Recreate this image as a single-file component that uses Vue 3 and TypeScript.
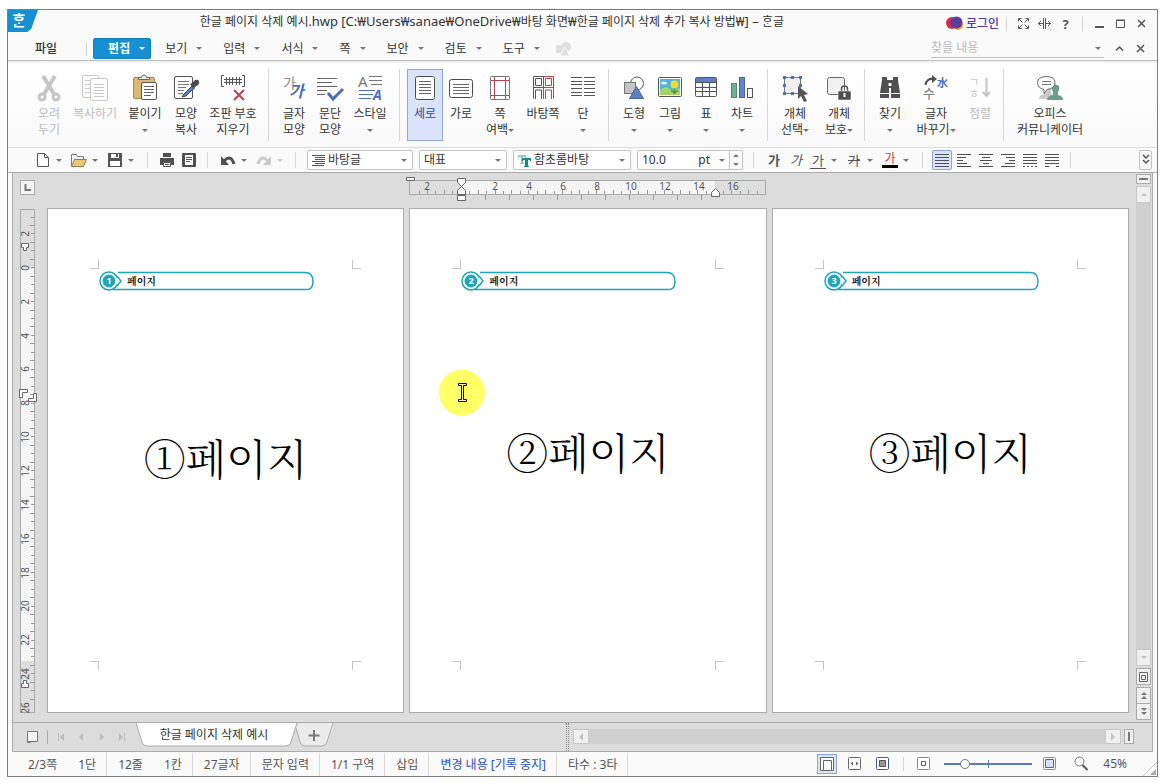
<script setup lang="ts">
import { ref } from 'vue'

interface Tool {
  icon: string
  lines: string[]
  size: string
  arrow?: 'below' | 'inline'
  off?: boolean
  on?: boolean
}

const menus = ['보기', '입력', '서식', '쪽', '보안', '검토', '도구']

const icons: Record<string, string> = {
  cut: '<g fill="none" stroke="#c6c6c6"><circle cx="7" cy="23" r="3" stroke-width="3"/><circle cx="21" cy="23" r="3" stroke-width="3"/><path d="M8 2l11 18M20 2L9 20" stroke-width="4"/></g>',
  copy: '<g fill="#fdfdfd" stroke="#c9c9c9"><rect x="1.500" y="1.500" width="16" height="22" rx="1.500"/><path d="M4 6.500h10M4 10.500h6M4 14.500h6M4 18.500h6"/><rect x="9.500" y="4.500" width="17" height="22" rx="1.500"/><path d="M13 10.500h10M13 13.500h10M13 16.500h10M13 19.500h10M13 22.500h10"/></g>',
  paste: '<rect x="2.500" y="3.500" width="21" height="21" rx="1.500" fill="#dcb873" stroke="#a58a52"/><path d="M7.500 5.500v-2h3q0-2.500 2.500-2.500t2.500 2.500h3v2z" fill="#eee" stroke="#6b6459"/><rect x="10.500" y="8.500" width="15" height="17" rx="1.500" fill="#fff" stroke="#555"/><path d="M13 12.500h10M13 15.500h10M13 18.500h10M13 21.500h7" stroke="#666"/>',
  brush: '<rect x="2.500" y="2.500" width="18" height="22" rx="1.500" fill="#fff" stroke="#555"/><path d="M6 7.500h11M6 10.500h11M6 13.500h8M6 16.500h6M6 19.500h5" stroke="#777"/><path d="M12 20l8-8 2 2-8 8-4 1z" fill="#5a82c4" stroke="#444"/><path d="M18 10l2-1 3-3q3-1 4 1t-1 4l-3 2-1 3z" fill="#4a4a4a"/>',
  marks: '<g fill="none" stroke="#555"><path d="M5 1.500H2.500v11H5M23 1.500h2.500v11H23M5 5.500h18M5 8.500h18M7.500 3v8M10.500 3v8M13.500 3v8M17.500 3v8M20.500 3v8"/><path d="M15 16l10 10M25 16L15 26" stroke="#bc4349" stroke-width="2"/></g>',
  charshape: '<text x="3" y="14" font-size="14" fill="#8a8a8a">가</text><text x="9" y="23" font-size="16" font-weight="700" font-style="italic" fill="#4e6db8">가</text>',
  parashape: '<path d="M1 4.500h20M1 8.500h15M1 12.500h20M1 16.500h10M1 20.500h8" stroke="#666"/><path d="M12 19l5 6 10-10" fill="none" stroke="#4e6db8" stroke-width="3"/>',
  style: '<text x="2" y="13" font-size="15" fill="#777">A</text><path d="M13 2.500h13M13 6.500h13M15 10.500h11" stroke="#777"/><path d="M3 16.500h16M3 20.500h14M3 24.500h12" stroke="#4e6db8"/><text x="17" y="26" font-size="14" font-weight="700" font-style="italic" fill="#4e6db8">A</text>',
  portrait: '<rect x="4.500" y="2.500" width="19" height="23" rx="2" fill="#fff" stroke="#4c4c4c"/><path d="M8 7.500h12M8 10.500h12M8 13.500h12M8 16.500h12M8 19.500h12" stroke="#666"/>',
  landscape: '<rect x="2.500" y="5.500" width="23" height="18" rx="2" fill="#fff" stroke="#4c4c4c"/><path d="M6 10.500h16M6 13.500h16M6 16.500h16M6 19.500h16" stroke="#666"/>',
  margin: '<rect x="4.500" y="2.500" width="19" height="23" rx="1" fill="#fff" stroke="#777"/><path d="M8.500 3v22M19.500 3v22M5 6.500h18M5 21.500h18" stroke="#bc4349"/>',
  master: '<g fill="none" stroke="#555"><path d="M14 2.500H4.500v22M14 13.500H4.500M6.500 4.500h6v7h-6zM6.500 25v-9h6v9"/><path d="M14.500 2.500h10v22M14.500 2v23M14.500 13.500h10M16.500 4.500h6v7h-6zM16.500 25v-9h6v9" stroke="#bc4349"/></g>',
  columns: '<path d="M2 3.500h11M2 7.500h11M2 10.500h11M2 14.500h11M2 18.500h11M2 21.500h11M15 3.500h11M15 7.500h11M15 10.500h11M15 14.500h11M15 18.500h11M15 21.500h11" stroke="#555"/>',
  shapes: '<circle cx="17" cy="9.500" r="6.500" fill="#fff" stroke="#555"/><rect x="4.500" y="8.500" width="11" height="11" fill="#c4c4c4" stroke="#777"/><path d="M16.500 12.500l7 12h-14z" fill="#5f7fc4" stroke="#46649f"/>',
  image: '<rect x="2.500" y="3.500" width="23" height="19" rx="1" fill="#fff" stroke="#555"/><rect x="4" y="5" width="20" height="16" fill="#52b2dc"/><path d="M4 16q6-6 12 1l8-3v7H4z" fill="#a6d46a"/><ellipse cx="8" cy="9" rx="3" ry="1.500" fill="#e4f4fa"/><path d="M18.500 13v7M15 17q3 0 3.500 3q.5-3 3.500-3" fill="none" stroke="#4c9a38" stroke-width="1.500"/><circle cx="18.500" cy="10.500" r="4" fill="#f4dc2c"/>',
  table: '<rect x="3.500" y="3.500" width="21" height="19" rx="1" fill="#fff" stroke="#555"/><path d="M4 4h20v4H4z" fill="#5f7fc4"/><path d="M4 8.500h20M4 13.500h20M4 17.500h20M10.500 8v14M17.500 8v14" stroke="#555"/>',
  chart: '<rect x="3.500" y="9.500" width="5" height="14" fill="#74ae8d" stroke="#4e8a69"/><rect x="11.500" y="3.500" width="5" height="20" fill="#6583c8" stroke="#46649f"/><rect x="19.500" y="14.500" width="5" height="9" fill="#fff" stroke="#555"/>',
  pick: '<rect x="3.500" y="3.500" width="16" height="16" fill="#f0f0f0" stroke="#777"/><path d="M2 2h3v3H2zM10 2h3v3h-3zM18 2h3v3h-3zM2 10h3v3H2zM18 10h3v3h-3zM2 18h3v3H2zM10 18h3v3h-3z" fill="#4e6fb8"/><path d="M17 12l10 8-4 1 3 6-3 1-3-6-3 3z" fill="#555"/>',
  lock: '<rect x="2.500" y="3.500" width="17" height="17" rx="2" fill="#f0f0f0" stroke="#666"/><path d="M16.500 18v-3q0-3 3-3t3 3v3" fill="none" stroke="#555" stroke-width="1.500"/><rect x="13" y="17" width="13" height="9" rx="1" fill="#505050" stroke="#fff" stroke-width=".5"/><path d="M19.500 19v4" stroke="#fff" stroke-width="2"/>',
  find: '<path d="M6 3h5v3h6V3h5v3l2 13h-9v-5h-2v5H4L6 6zM4 20h9v4H4zM15 20h9v4h-9z" fill="#505050"/><path d="M12.500 9h3v3h-3z" fill="#fff"/>',
  convert: '<text x="1" y="24" font-size="13" fill="#777">수</text><text x="15" y="13" font-size="11" font-weight="700" fill="#4e75bd">水</text><path d="M3.500 11q1-7 8-6" fill="none" stroke="#505050" stroke-width="2"/><path d="M10 1l5 4-5 4z" fill="#505050"/>',
  sort: '<text x="3" y="12" font-size="11" fill="#c4c4c4">ㄱ</text><text x="3" y="24" font-size="11" fill="#c4c4c4">ㅎ</text><path d="M20.500 4v18M17 18l3.500 4 3.500-4" fill="none" stroke="#c4c4c4" stroke-width="2"/>',
  office: '<path d="M3 25q0-4 5-5V14h7v6q4 1 4 5z" fill="#c9c9c9"/><path d="M11 26q0-4 6-5v-3q-2-3-1-6 3-3 7 0 1 3-1 6v3q5 1 5 5z" fill="#6b9e86"/><path d="M10 2.500q9 0 9 6t-8 7l-3 4v-4Q1.500 14 1.500 8.500t8.500-6z" fill="#fff" stroke="#666"/><path d="M6 7.500h9M6 10.500h9" stroke="#777"/>'
}

const groups: { tight?: boolean; tools: Tool[] }[] = [
  {
    tools: [
      { icon: 'cut', lines: ['오려', '두기'], size: 'w36', off: true },
      { icon: 'copy', lines: ['복사하기'], size: 'w56', off: true },
      { icon: 'paste', lines: ['붙이기'], size: 'w44', arrow: 'below' },
      { icon: 'brush', lines: ['모양', '복사'], size: 'w38' },
      { icon: 'marks', lines: ['조판 부호', '지우기'], size: 'w56' }
    ]
  },
  {
    tools: [
      { icon: 'charshape', lines: ['글자', '모양'], size: 'w36' },
      { icon: 'parashape', lines: ['문단', '모양'], size: 'w36' },
      { icon: 'style', lines: ['스타일'], size: 'w44', arrow: 'below' }
    ]
  },
  {
    tools: [
      { icon: 'portrait', lines: ['세로'], size: 'w36', on: true },
      { icon: 'landscape', lines: ['가로'], size: 'w36' },
      { icon: 'margin', lines: ['쪽', '여백'], size: 'w42', arrow: 'inline' },
      { icon: 'master', lines: ['바탕쪽'], size: 'w44' },
      { icon: 'columns', lines: ['단'], size: 'w36', arrow: 'below' }
    ]
  },
  {
    tools: [
      { icon: 'shapes', lines: ['도형'], size: 'w36', arrow: 'below' },
      { icon: 'image', lines: ['그림'], size: 'w36', arrow: 'below' },
      { icon: 'table', lines: ['표'], size: 'w36', arrow: 'below' },
      { icon: 'chart', lines: ['차트'], size: 'w36', arrow: 'below' }
    ]
  },
  {
    tight: true,
    tools: [
      { icon: 'pick', lines: ['개체', '선택'], size: 'w44', arrow: 'inline' },
      { icon: 'lock', lines: ['개체', '보호'], size: 'w44', arrow: 'inline' }
    ]
  },
  {
    tools: [
      { icon: 'find', lines: ['찾기'], size: 'w36', arrow: 'below' },
      { icon: 'convert', lines: ['글자', '바꾸기'], size: 'w56', arrow: 'inline' },
      { icon: 'sort', lines: ['정렬'], size: 'w32', off: true }
    ]
  },
  { tools: [{ icon: 'office', lines: ['오피스', '커뮤니케이터'], size: 'w78' }] }
]

const aligns = [
  { label: '양쪽 정렬', d: 'M0 1.500h14M0 4.500h14M0 7.500h14M0 10.500h14M0 13.500h14' },
  { label: '왼쪽 정렬', d: 'M0 1.500h14M0 4.500h9M0 7.500h6M0 10.500h10M0 13.500h14' },
  { label: '가운데 정렬', d: 'M0 1.500h14M3 4.500h8M1 7.500h12M4 10.500h6M0 13.500h14' },
  { label: '오른쪽 정렬', d: 'M0 1.500h14M5 4.500h9M8 7.500h6M4 10.500h10M0 13.500h14' },
  { label: '배분 정렬', d: 'M0 1.500h14M0 4.500h14M0 7.500h14M0 10.500h14M0 13.500h2M4 13.500h2M8 13.500h2M12 13.500h2' },
  { label: '나눔 정렬', d: 'M0 1.500h14M0 4.500h14M0 7.500h14M0 10.500h14M0 13.500h4M11 13.500h3' }
]

const pages = ['①', '②', '③']
const marks = ['tl', 'tr', 'bl', 'br']

const hNumbers = Array.from({ length: 10 }, (_, i) => ({ n: Math.abs(i * 2 - 2), x: 18 + i * 34 })).filter(m => m.n !== 0)
const hTicks = Array.from({ length: 41 }, (_, i) => ({ x: Math.floor(10 + i * 8.45), h: i % 2 ? 4 : 3 }))
const tabTicks = Array.from({ length: 10 }, (_, i) => 76 + i * 24)
const vNumbers = Array.from({ length: 15 }, (_, i) => ({ n: Math.abs(i * 2 - 2), y: Math.round(25 + i * 33.85) }))
const vTicks = Array.from({ length: 58 }, (_, i) => ({ y: Math.floor(8 + i * 8.46), w: i % 2 ? 4 : 3 }))

const keyword = ref('')
const fontSize = ref('10.0')
const zoom = ref(20)
</script>

<template>
  <div class="desk">
    <main class="window">
      <header class="titlebar">
        <div class="brand">ᄒᆞᆫ</div>
        <h1>한글 페이지 삭제 예시.<span>hwp [C:₩Users₩sanae₩OneDrive₩</span>바탕 화면<span>₩</span>한글 페이지 삭제 추가 복사 방법<span>₩] – </span>ᄒᆞᆫ글</h1>
        <button class="login">
          <svg width="17" height="15"><circle cx="6" cy="7" r="6" fill="#d8284f" /><circle cx="12" cy="9" r="5" fill="#f29a2e" /><circle cx="10.500" cy="6.500" r="6" fill="#5a3d9c" /></svg>
          로그인
        </button>
        <i class="bar" />
        <button class="glyph" aria-label="전체 화면"><svg width="13" height="13"><path d="M1.500 4.500v-3h3M8.500 1.500h3v3M11.500 8.500v3h-3M4.500 11.500h-3v-3M2 2l3.500 3.500M11 2L7.500 5.500M2 11l3.500-3.500M11 11L7.500 7.500" /></svg></button>
        <button class="glyph" aria-label="창 너비"><svg width="13" height="13"><path d="M5.500 1v11M7.500 1v11M0 6.500h5M8 6.500h5M3 4L.5 6.500 3 9M10 4l2.500 2.500L10 9" /></svg></button>
        <button class="glyph help" aria-label="도움말">?</button>
        <i class="bar second" />
        <button class="glyph" aria-label="최소화"><svg width="13" height="13"><path d="M2 10h9" stroke-width="2" /></svg></button>
        <button class="glyph" aria-label="최대화"><svg width="13" height="13"><path d="M2.500 3.500h8v7h-8zM2 3h9" /></svg></button>
        <button class="glyph" aria-label="닫기"><svg width="13" height="13"><path d="M3 3l7 7M10 3l-7 7" stroke-width="1.500" /></svg></button>
      </header>

      <nav class="menubar">
        <button class="file">파일</button>
        <i class="bar" />
        <button class="edit">편집<i class="caret" /></button>
        <button v-for="m in menus" :key="m" class="menu">{{ m }}<i class="caret" /></button>
        <svg class="shapes" width="15" height="14" fill="#dfdfdf"><circle cx="10" cy="5" r="5" /><path d="M0 3h8v8H0z" /><path d="M9 5l5 9H4z" stroke="#fafafa" /></svg>
        <div class="search">
          <input v-model="keyword" aria-label="찾을 내용" placeholder="찾을 내용" />
          <i class="caret" />
        </div>
        <button class="glyph" aria-label="메뉴 접기"><svg width="13" height="13"><path d="M3 8.500L6.500 5 10 8.500" stroke-width="1.500" /></svg></button>
        <button class="glyph last" aria-label="문서 닫기"><svg width="13" height="13"><path d="M3 3l7 7M10 3l-7 7" stroke-width="1.500" /></svg></button>
      </nav>

      <section class="ribbon">
        <div v-for="(g, gi) in groups" :key="gi" class="group" :class="{ tight: g.tight }">
          <button v-for="t in g.tools" :key="t.icon" class="tool" :class="[t.size, { off: t.off, on: t.on }]" :disabled="t.off">
            <svg width="28" height="28" v-html="icons[t.icon]" />
            <span v-for="(l, li) in t.lines" :key="l">{{ l }}<i v-if="t.arrow === 'inline' && li === 1" class="caret" /></span>
            <i v-if="t.arrow === 'below'" class="caret" />
          </button>
        </div>
      </section>

      <section class="toolbar">
        <button class="q" aria-label="새 문서"><svg width="16" height="16" fill="#fff" stroke="#555"><path d="M2.500 1.500h7l4 4v9h-11zM9.500 1.500v4h4" /></svg><i class="caret" /></button>
        <button class="q" aria-label="열기"><svg width="16" height="16" fill="#f4f4f4" stroke="#777"><path d="M.5 14V2.500h5l1 2h6v3" /><path d="M.5 14.500l3-7h12l-3 7z" fill="#ecc874" stroke="#8f7c50" /></svg><i class="caret" /></button>
        <button class="q" aria-label="저장"><svg width="16" height="16" fill="#555"><path d="M1 1h14v14H1z" /><path d="M4 2h8v4H4zM3 9h10v5H3z" fill="#fff" /><path d="M9 2h2v3H9z" /></svg><i class="caret" /></button>
        <i class="bar b1" />
        <button class="p" aria-label="인쇄"><svg width="16" height="16" fill="#505050"><path d="M4 1h8v4H4zM1 6h14v7h-3v-3H4v3H1z" /><path d="M4.500 10.500h7v4h-7z" fill="#fff" stroke="#505050" /><path d="M6 12.500h4" stroke="#505050" /></svg></button>
        <button class="p" aria-label="미리 보기"><svg width="16" height="16" fill="#505050"><rect x="1" y="1" width="14" height="14" rx="1" /><path d="M4 3h8v10H4z" fill="#fff" /><path d="M5 5.500h6M5 7.500h6M5 9.500h4" stroke="#505050" /></svg></button>
        <i class="bar b2" />
        <button class="q" aria-label="되돌리기"><svg width="16" height="16"><path d="M4 9q7-7 10 3" fill="none" stroke="#505050" stroke-width="3" /><path d="M1 4v9h8z" fill="#505050" /></svg><i class="caret" /></button>
        <button class="q dim" aria-label="다시 실행"><svg width="16" height="16"><path d="M12 9q-7-7-10 3" fill="none" stroke="#cbcbcb" stroke-width="3" /><path d="M15 4v9H7z" fill="#cbcbcb" /></svg><i class="caret" /></button>
        <i class="bar b3" />
        <label class="combo style">
          <svg width="13" height="13" stroke="#555"><path d="M0 1.500h13M3 3.500h10M3 5.500h10M0 7.500h13M3 9.500h10M0 11.500h12" /></svg>
          <select aria-label="스타일"><option>바탕글</option></select><i class="caret" />
        </label>
        <label class="combo lang"><select aria-label="글꼴 언어"><option>대표</option></select><i class="caret" /></label>
        <label class="combo font">
          <svg width="13" height="13"><path d="M0 1h8v3H7V3H5v6h1v1H2V9h1V3H1v1H0z" fill="#9ccbb8" /><path d="M4 4h9v3h-1V6h-2v6h1v1H6v-1h1V6H5v1H4z" fill="#18897a" /></svg>
          <select aria-label="글꼴"><option>함초롬바탕</option></select><i class="caret" />
        </label>
        <div class="combo size">
          <input v-model="fontSize" aria-label="글자 크기" /><span>pt</span><i class="caret" />
          <div class="spin"><button aria-label="크게"><i class="caret up" /></button><button aria-label="작게"><i class="caret" /></button></div>
        </div>
        <i class="bar b4" />
        <button class="ch bold">가</button>
        <button class="ch ital">가</button>
        <button class="ch und">가</button><i class="caret after" />
        <button class="ch strike">가</button><i class="caret after" />
        <button class="ch color">가</button><i class="caret after" />
        <i class="bar b5" />
        <button v-for="(a, i) in aligns" :key="a.label" class="al" :class="{ on: i === 0 }" :aria-label="a.label"><svg width="14" height="15" stroke="#505050"><path :d="a.d" /></svg></button>
        <i class="bar b6" />
        <button class="more" aria-label="더 보기"><svg width="8" height="12" fill="none" stroke="#555"><path d="M1 1l3 3 3-3M1 6l3 3 3-3" stroke-width="1.500" /></svg></button>
      </section>

      <section class="canvas">
        <button class="corner" aria-label="탭 종류"><svg width="13" height="13"><path d="M4.500 3v6H10" fill="none" stroke="#777" stroke-width="2" /></svg></button>
        <div class="topruler">
          <svg class="hruler" width="357" height="32">
            <rect x=".5" y="7.500" width="356" height="14" fill="#dedede" stroke="#aaa" />
            <path d="M52 8h254v13H52z" fill="#f5f5f5" />
            <path v-for="t in hTicks" :key="t.x" :d="`M${t.x}.5 21v-${t.h}`" stroke="#999" />
            <path v-for="x in tabTicks" :key="x" :d="`M${x}.5 22v5`" stroke="#999" />
            <text v-for="m in hNumbers" :key="m.x" :x="m.x" y="17" text-anchor="middle">{{ m.n }}</text>
            <g fill="#fff" stroke="#666">
              <path d="M-2.500 4.500h8v3h-8z" />
              <path d="M48.500 5.500h8v4l-4 4-4-4zM48.500 21.500v-4l4-4 4 4v4zM48.500 22.500h8v5h-8zM302.500 23.500v-4l4-4 4 4v4z" />
            </g>
          </svg>
        </div>
        <svg class="vruler" width="19" height="504">
          <rect x="2.500" y=".5" width="14" height="503" fill="#dedede" stroke="#aaa" />
          <path d="M3 60h13v392H3z" fill="#f5f5f5" />
          <path v-for="t in vTicks" :key="t.y" :d="`M16 ${t.y}.5h-${t.w}`" stroke="#999" />
          <text v-for="m in vNumbers" :key="m.y" :transform="`translate(11 ${m.y}) rotate(-90)`" text-anchor="middle">{{ m.n }}</text>
          <g fill="#fff" stroke="#666">
            <path d="M3.500 34.500h7v4h-2v3h-3v-3h-2zM1.500 180.500h8v3h-5v5h-3zM10.500 192.500h8v-8h-3v5h-5zM3.500 478.500h7v-4h-2v-3h-3v3h-2z" />
          </g>
        </svg>
        <div class="sheets">
          <article v-for="(p, i) in pages" :key="p" class="sheet" :class="{ first: i === 0 }">
            <i v-for="m in marks" :key="m" class="mark" :class="m" />
            <div class="note">
              <svg width="218" height="22" fill="none" stroke="#1fa5b8">
                <path d="M19 2.500H206q8 0 8 9t-8 8H14" stroke-width="1.500" />
                <circle cx="10" cy="11" r="9" fill="#fff" stroke-width="1.500" />
                <path d="M18 6l4 5-4 5" fill="#fff" stroke-width="1.500" />
                <circle cx="10" cy="11" r="6" fill="#1fa5b8" />
                <text x="10" y="14" text-anchor="middle">{{ i + 1 }}</text>
              </svg>
              <b>페이지</b>
            </div>
            <p>{{ p }}페이지</p>
            <div v-if="i === 1" class="pointer">
              <svg width="47" height="47"><circle cx="23" cy="23.500" r="23" fill="#ffff66" /><path d="M19.500 14.500h8v2h-3v14h3v2h-8v-2h3v-14h-3z" fill="#ffff66" stroke="#000" /></svg>
            </div>
          </article>
        </div>
        <div class="vscroll">
          <button class="split" aria-label="창 나누기"><i /></button>
          <button class="arrow" aria-label="위로"><i class="caret up" /></button>
          <div class="track" />
          <button class="arrow" aria-label="아래로"><i class="caret" /></button>
          <button class="nav" aria-label="쪽 보기"><svg width="13" height="14" fill="none" stroke="#666"><path d="M2.500 2.500h8v9h-8zM4.500 5.500h4v4h-4z" /></svg></button>
          <button class="nav" aria-label="이전 쪽"><i class="caret up" /><i class="caret up" /></button>
          <button class="nav low" aria-label="다음 쪽"><i class="caret" /><i class="caret" /></button>
        </div>
      </section>

      <section class="tabs">
        <button class="list" aria-label="문서 목록"><svg width="13" height="14" fill="#f4f4f4" stroke="#777"><path d="M1.500 1.500h10v10h-6l-1 1h-3zM2 11.500h4" /></svg></button>
        <i class="bar" />
        <div class="steps">
          <button aria-label="처음"><svg width="9" height="8"><path d="M1 0h1v8H1zM7 0v8L3 4z" /></svg></button>
          <button aria-label="이전"><svg width="9" height="8"><path d="M6 0v8L2 4z" /></svg></button>
          <button aria-label="다음"><svg width="9" height="8"><path d="M3 0v8l4-4z" /></svg></button>
          <button aria-label="마지막"><svg width="9" height="8"><path d="M2 0v8l4-4zM7 0h1v8H7z" /></svg></button>
        </div>
        <button class="tab">
          <svg width="162" height="24"><path d="M0 0l6 19q1 4 5 4h139q4 0 5-4l6-19" fill="#fff" stroke="#aaa" /></svg>
          <span>한글 페이지 삭제 예시</span>
        </button>
        <button class="add" aria-label="새 탭">
          <svg width="39" height="24"><path d="M4 0h35l-6 19q-1 4-5 4H10q-4 0-5-4L1 5z" fill="#ebebeb" /><path d="M38 0l-6 19q-1 4-5 4H10q-4 0-5-4L1 5" fill="none" stroke="#aaa" /><path d="M19 7v11M13.500 12.500h11" stroke="#777" stroke-width="2" /></svg>
        </button>
        <i class="grip" />
        <div class="hscroll">
          <button aria-label="왼쪽으로"><i class="caret left" /></button>
          <div class="track" />
          <button aria-label="오른쪽으로"><i class="caret right" /></button>
        </div>
        <button class="end" aria-label="세로 나누기"><i /></button>
      </section>

      <footer class="status">
        <span class="s1">2/3쪽</span><span class="cut">1단</span>
        <span>12줄</span><span class="cut">1칸</span>
        <span class="cut">27글자</span><span class="cut">문자 입력</span><span class="cut">1/1 구역</span><span class="cut">삽입</span>
        <span class="cut blue">변경 내용 [기록 중지]</span><span class="cut">타수 : 3타</span>
        <div class="views">
          <button class="v on" aria-label="쪽 윤곽"><svg width="18" height="18" fill="#fff" stroke="#666"><path d="M2.500 2.500h13v13h-13z" /><path d="M5.500 15.500v-10h8v10z" /></svg></button>
          <button class="v" aria-label="폭 맞춤"><svg width="18" height="18" fill="#fff" stroke="#666"><rect x="2.500" y="2.500" width="12" height="12" rx="1" /><path d="M7 6.500L4.500 8.500 7 10.500zM10 6.500l2.500 2-2.500 2z" fill="#666" stroke="none" /></svg></button>
          <button class="v" aria-label="쪽 맞춤"><svg width="18" height="18" fill="#fff" stroke="#3f5a94"><rect x="2.500" y="2.500" width="12" height="12" rx="1" /><path d="M5.500 5.500h6v6h-6z" fill="#999" stroke="#555" /></svg></button>
          <i class="bar" />
          <button class="v" aria-label="축소"><svg width="18" height="18" fill="#fff" stroke="#888"><rect x="2.500" y="2.500" width="12" height="12" rx="1" /><path d="M6.500 6.500h4v4h-4z" stroke="#3f66b8" /></svg></button>
          <input v-model="zoom" class="slider" type="range" min="0" max="100" aria-label="확대 비율" />
          <button class="v" aria-label="확대"><svg width="18" height="18" fill="#fff" stroke="#888"><rect x="2.500" y="2.500" width="12" height="12" rx="1" /><path d="M4.500 4.500h8v8h-8z" fill="#d8e2fa" stroke="#3f66b8" /></svg></button>
          <button class="v lens" aria-label="확대/축소"><svg width="18" height="18" fill="none" stroke="#777"><circle cx="7.500" cy="6.500" r="4.500" /><path d="M10.500 10l5 5" stroke="#555" stroke-width="2" /></svg></button>
          <span class="pct">45%</span>
          <svg class="resize" width="14" height="14"><path d="M0 14L14 0" stroke="#c4c4c4" /><path d="M13 7v6H7z" fill="#aaa" /></svg>
        </div>
      </footer>
    </main>
  </div>
</template>

<style>
body { margin: 0; background: #fff; }
</style>

<style scoped>
.desk { box-sizing: border-box; min-height: 100vh; display: flex; padding: 9px 7px 7px; font: 12px/16px "Noto Sans", "Noto Sans CJK KR", sans-serif; color: #333; }
.desk * { box-sizing: border-box; }
button, input, select { font: inherit; color: inherit; border: 0; padding: 0; margin: 0; background: none; border-radius: 0; }
svg { display: block; flex: none; }
.window { flex: 1; min-width: 0; display: flex; flex-direction: column; border: 1px solid #7c7c7c; background: #fafafa; }
.caret { flex: none; width: 0; height: 0; border: 3px solid transparent; border-top-color: #777; border-bottom-width: 0; }
.caret.up { border-width: 0 3px 3px; border-color: transparent transparent #777; }
.caret.left { border-width: 4px 4px 4px 0; border-color: transparent #c2c2c2 transparent transparent; }
.caret.right { border-width: 4px 0 4px 4px; border-color: transparent transparent transparent #c2c2c2; }
.bar { flex: none; width: 1px; height: 14px; background: #d4d4d4; }

.titlebar { height: 27px; display: flex; align-items: center; padding-right: 5px; }
.brand { align-self: flex-start; width: 30px; height: 22px; padding-left: 4px; background: #1690d2; color: #fff; font-size: 15px; font-weight: 700; line-height: 21px; clip-path: polygon(0 0, 100% 0, 78% 84%, 65% 100%, 0 100%); }
h1 { flex: 1; margin: 0; padding-bottom: 4px; text-align: center; font-size: 12px; font-weight: 400; white-space: nowrap; }
h1 span { font-size: 13px; }
.login { display: flex; align-items: center; gap: 3px; margin-right: 7px; color: #5336b4; font-weight: 500; }
.glyph { display: flex; justify-content: center; width: 21px; }
.glyph svg { fill: none; stroke: #555; }
.help { font-weight: 700; font-size: 13px; color: #555; }
.titlebar .bar { margin-right: 6px; }
.titlebar .second { margin-left: 6px; }

.menubar { height: 24px; display: flex; align-items: center; border-bottom: 1px solid #bebebe; }
.file { margin: 0 29px 0 27px; font-weight: 500; }
.edit { display: flex; align-items: center; gap: 9px; height: 21px; margin: 0 14px 0 6px; padding: 0 5px 0 14px; border: 1px solid #0f7fbd; border-radius: 2px; background: #1690d2; color: #fff; font-weight: 700; }
.edit .caret { border-top-color: #fff; }
.menu { display: flex; align-items: center; gap: 9px; margin-right: 21px; }
.shapes { margin-left: -5px; }
.search { display: flex; align-items: center; width: 173px; height: 18px; margin: 0 5px 0 auto; border-bottom: 1px solid #bebebe; padding-right: 3px; }
.search input { flex: 1; min-width: 0; outline: 0; }
.search input::placeholder { color: #bbb; opacity: 1; }
.last { margin-right: 6px; }

.ribbon { display: flex; padding: 8px 0 6px 16px; border-bottom: 1px solid #dcdcdc; background: linear-gradient(#f3f3f3 2px, #fff 2px, #f9f9f9); }
.group { display: flex; padding: 0 7px; border-right: 1px solid #d8d8d8; }
.group.tight { padding: 0 3px 0 5px; }
.group:last-child { border-right: 0; }
.tool { display: flex; flex-direction: column; align-items: center; height: 72px; padding-top: 4px; border: 1px solid transparent; white-space: nowrap; }
.tool svg { margin-bottom: 4px; overflow: visible; }
.tool > .caret { margin-top: 7px; }
.tool span { display: flex; align-items: center; }
.tool.off { color: #bbb; }
.tool.on { background: #dae3f9; border-color: #8ea6e0; color: #2c4a94; }
.w32 { width: 32px; } .w36 { width: 36px; } .w38 { width: 38px; } .w42 { width: 42px; } .w44 { width: 44px; } .w56 { width: 56px; } .w78 { width: 78px; }

.toolbar { display: flex; align-items: center; height: 25px; padding-left: 27px; border-bottom: 1px solid #ababab; }
.q { display: flex; align-items: center; gap: 5px; width: 36px; }
.dim .caret { border-top-color: #cbcbcb; }
.p { width: 22px; }
.toolbar .bar { height: 16px; }
.b1 { margin: 0 11px 0 4px; } .b2 { margin: 0 12px 0 4px; } .b3 { margin: 0 11px 0 3px; }
.combo { display: flex; align-items: center; gap: 3px; height: 20px; padding: 0 5px 0 4px; border: 1px solid #c2c2c2; border-radius: 2px; background: #fff; margin-right: 6px; }
.combo select { flex: 1; min-width: 0; appearance: none; outline: 0; }
.combo.style { width: 106px; } .combo.lang { width: 88px; } .combo.font { width: 118px; }
.combo.size { width: 106px; padding-right: 0; margin-right: 10px; }
.combo.size input { flex: 1; min-width: 0; outline: 0; }
.combo.size span { margin-right: 6px; }
.spin { width: 13px; height: 18px; margin-left: 1px; border-left: 1px solid #c2c2c2; display: grid; }
.spin button { display: grid; place-items: center; }
.b4 { margin-right: 12px; }
.ch { width: 16px; height: 18px; margin-right: 6px; line-height: 16px; font-size: 13px; color: #555; }
.bold { font-weight: 700; }
.ital { font-style: italic; }
.und { border-bottom: 1px solid #555; margin-right: 5px; }
.strike { margin-right: 5px; text-decoration: line-through; }
.color { margin-right: 5px; color: #c23b3b; border-bottom: 3px solid #000; height: 16px; line-height: 13px; font-size: 12px; }
.after { margin-right: 9px; }
.b5 { margin: 0 9px 0 4px; }
.al { display: grid; place-items: center; width: 20px; height: 20px; margin-right: 2px; }
.al.on { background: #dae3f9; border: 1px solid #8ea6e0; border-radius: 2px; }
.b6 { margin-left: 6px; }
.more { display: grid; place-items: center; width: 13px; height: 20px; margin: 0 5px 0 auto; border: 1px solid #c2c2c2; border-radius: 2px; }

.canvas { flex: 1; display: grid; grid-template-columns: 22px minmax(0, 1fr) 15px; grid-template-rows: 35px minmax(0, 1fr); column-gap: 7px; margin: 0 4px; padding: 0 1px 9px 5px; border: solid #ababab; border-width: 0 1px; background: #dcdcdc; }
.corner { width: 15px; height: 15px; margin: 7px 0 0 2px; border: 1px solid #ababab; background: #f4f4f4; }
.topruler { display: grid; grid-template-columns: repeat(3, 1fr); column-gap: 5px; }
.hruler { grid-column: 2; overflow: visible; }
.canvas text { font-size: 10px; fill: #555; }
.vruler { margin-top: 1px; grid-row: 2; }
.sheets { grid-column: 2; display: grid; grid-template-columns: repeat(3, 1fr); column-gap: 5px; }
.sheet { position: relative; display: flex; flex-direction: column; border: 1px solid #ababab; background: #fff; }
.mark { position: absolute; width: 9px; height: 9px; border: 0 solid #c4c4c4; }
.tl { left: 42px; top: 51px; border-width: 0 1px 1px 0; }
.tr { right: 42px; top: 51px; border-width: 0 0 1px 1px; }
.bl { left: 42px; bottom: 42px; border-width: 1px 1px 0 0; }
.br { right: 42px; bottom: 42px; border-width: 1px 0 0 1px; }
.note { display: grid; align-items: center; margin: 61px 0 0 51px; }
.note svg, .note b { grid-area: 1 / 1; }
.note b { padding-left: 28px; font: 700 10px/20px "Noto Serif CJK KR", "Noto Sans CJK KR", serif; color: #111; }
.note text { font-size: 9px; font-weight: 700; fill: #fff; stroke: none; }
.sheet p { margin: 127px 0 0; text-align: center; font: 300 42px/64px "Noto Serif CJK KR", "Noto Sans CJK KR", serif; color: #000; }
.first p { margin-top: 133px; }
.pointer { position: absolute; left: 29px; top: 160px; }

.vscroll { grid-column: 3; grid-row: 1 / 3; display: flex; flex-direction: column; padding-top: 1px; }
.vscroll button { display: flex; flex-direction: column; align-items: center; justify-content: center; gap: 1px; border: 1px solid #ababab; background: #f0f0f0; }
.split { height: 10px; margin-bottom: 2px; }
.split i { width: 9px; height: 2px; background: #777; }
.vscroll .arrow { height: 17px; border-color: #c8c8c8; }
.arrow .caret { border-top-color: #c2c2c2; }
.arrow .caret.up { border-bottom-color: #c2c2c2; }
.track { flex: 1; background: #cfcfcf; }
.nav { height: 17px; margin-top: 2px; }
.low { margin-top: -1px; margin-bottom: -7px; }

.tabs { display: flex; height: 30px; margin: 0 4px; border: 1px solid #ababab; background: #dcdcdc; }
.list { padding: 0 8px 0 13px; }
.tabs .bar { align-self: center; background: #aaa; margin-right: 9px; }
.steps { display: flex; align-items: center; gap: 11px; margin-right: 10px; fill: #bcbcbc; }
.tab { display: grid; }
.tab svg, .tab span { grid-area: 1 / 1; }
.tab span { line-height: 24px; padding-right: 6px; }
.add { display: flex; margin-left: -3px; }
.grip { width: 3px; margin: 0 4px 0 auto; border: dotted #888; border-width: 0 1px; }
.hscroll { display: flex; align-items: center; width: 548px; height: 15px; margin-top: 6px; }
.hscroll .track { height: 15px; }
.hscroll button { display: grid; place-items: center; width: 16px; height: 15px; border: 1px solid #c8c8c8; background: #f0f0f0; }
.end { display: grid; place-items: center; width: 10px; height: 15px; margin: 6px 18px 0 3px; border: 1px solid #ababab; background: #f0f0f0; }
.end i { width: 2px; height: 9px; background: #777; }

.status { display: flex; align-items: center; height: 24px; white-space: nowrap; color: #555; }
.status > span { line-height: 23px; padding: 0 10px 0 11px; }
.status > .cut { border-right: 1px solid #d8d8d8; }
.status > .s1 { padding-left: 20px; }
.status > .s1 + .cut { border-right-color: #d8d8d8; }
.status > .blue { color: #2d4fc0; }
.views { display: flex; align-items: center; align-self: stretch; margin-left: auto; }
.v { width: 20px; height: 20px; display: grid; place-items: center; margin-right: 8px; }
.v.on { background: #dae3f9; border: 1px solid #8ea6e0; }
.views .bar { margin-right: 10px; margin-left: 2px; }
.slider { width: 88px; height: 14px; appearance: none; margin: 0 8px 0 2px; background: linear-gradient(#5b77c0, #5b77c0) center / 100% 2px no-repeat, linear-gradient(#5b77c0, #5b77c0) 50% 50% / 1px 8px no-repeat; }
.slider::-webkit-slider-thumb { appearance: none; width: 10px; height: 10px; border: 1px solid #777; border-radius: 50%; background: #fff; }
.lens { margin-left: 3px; }
.pct { margin: 0 16px 0 4px; }
.resize { align-self: flex-end; }
</style>
